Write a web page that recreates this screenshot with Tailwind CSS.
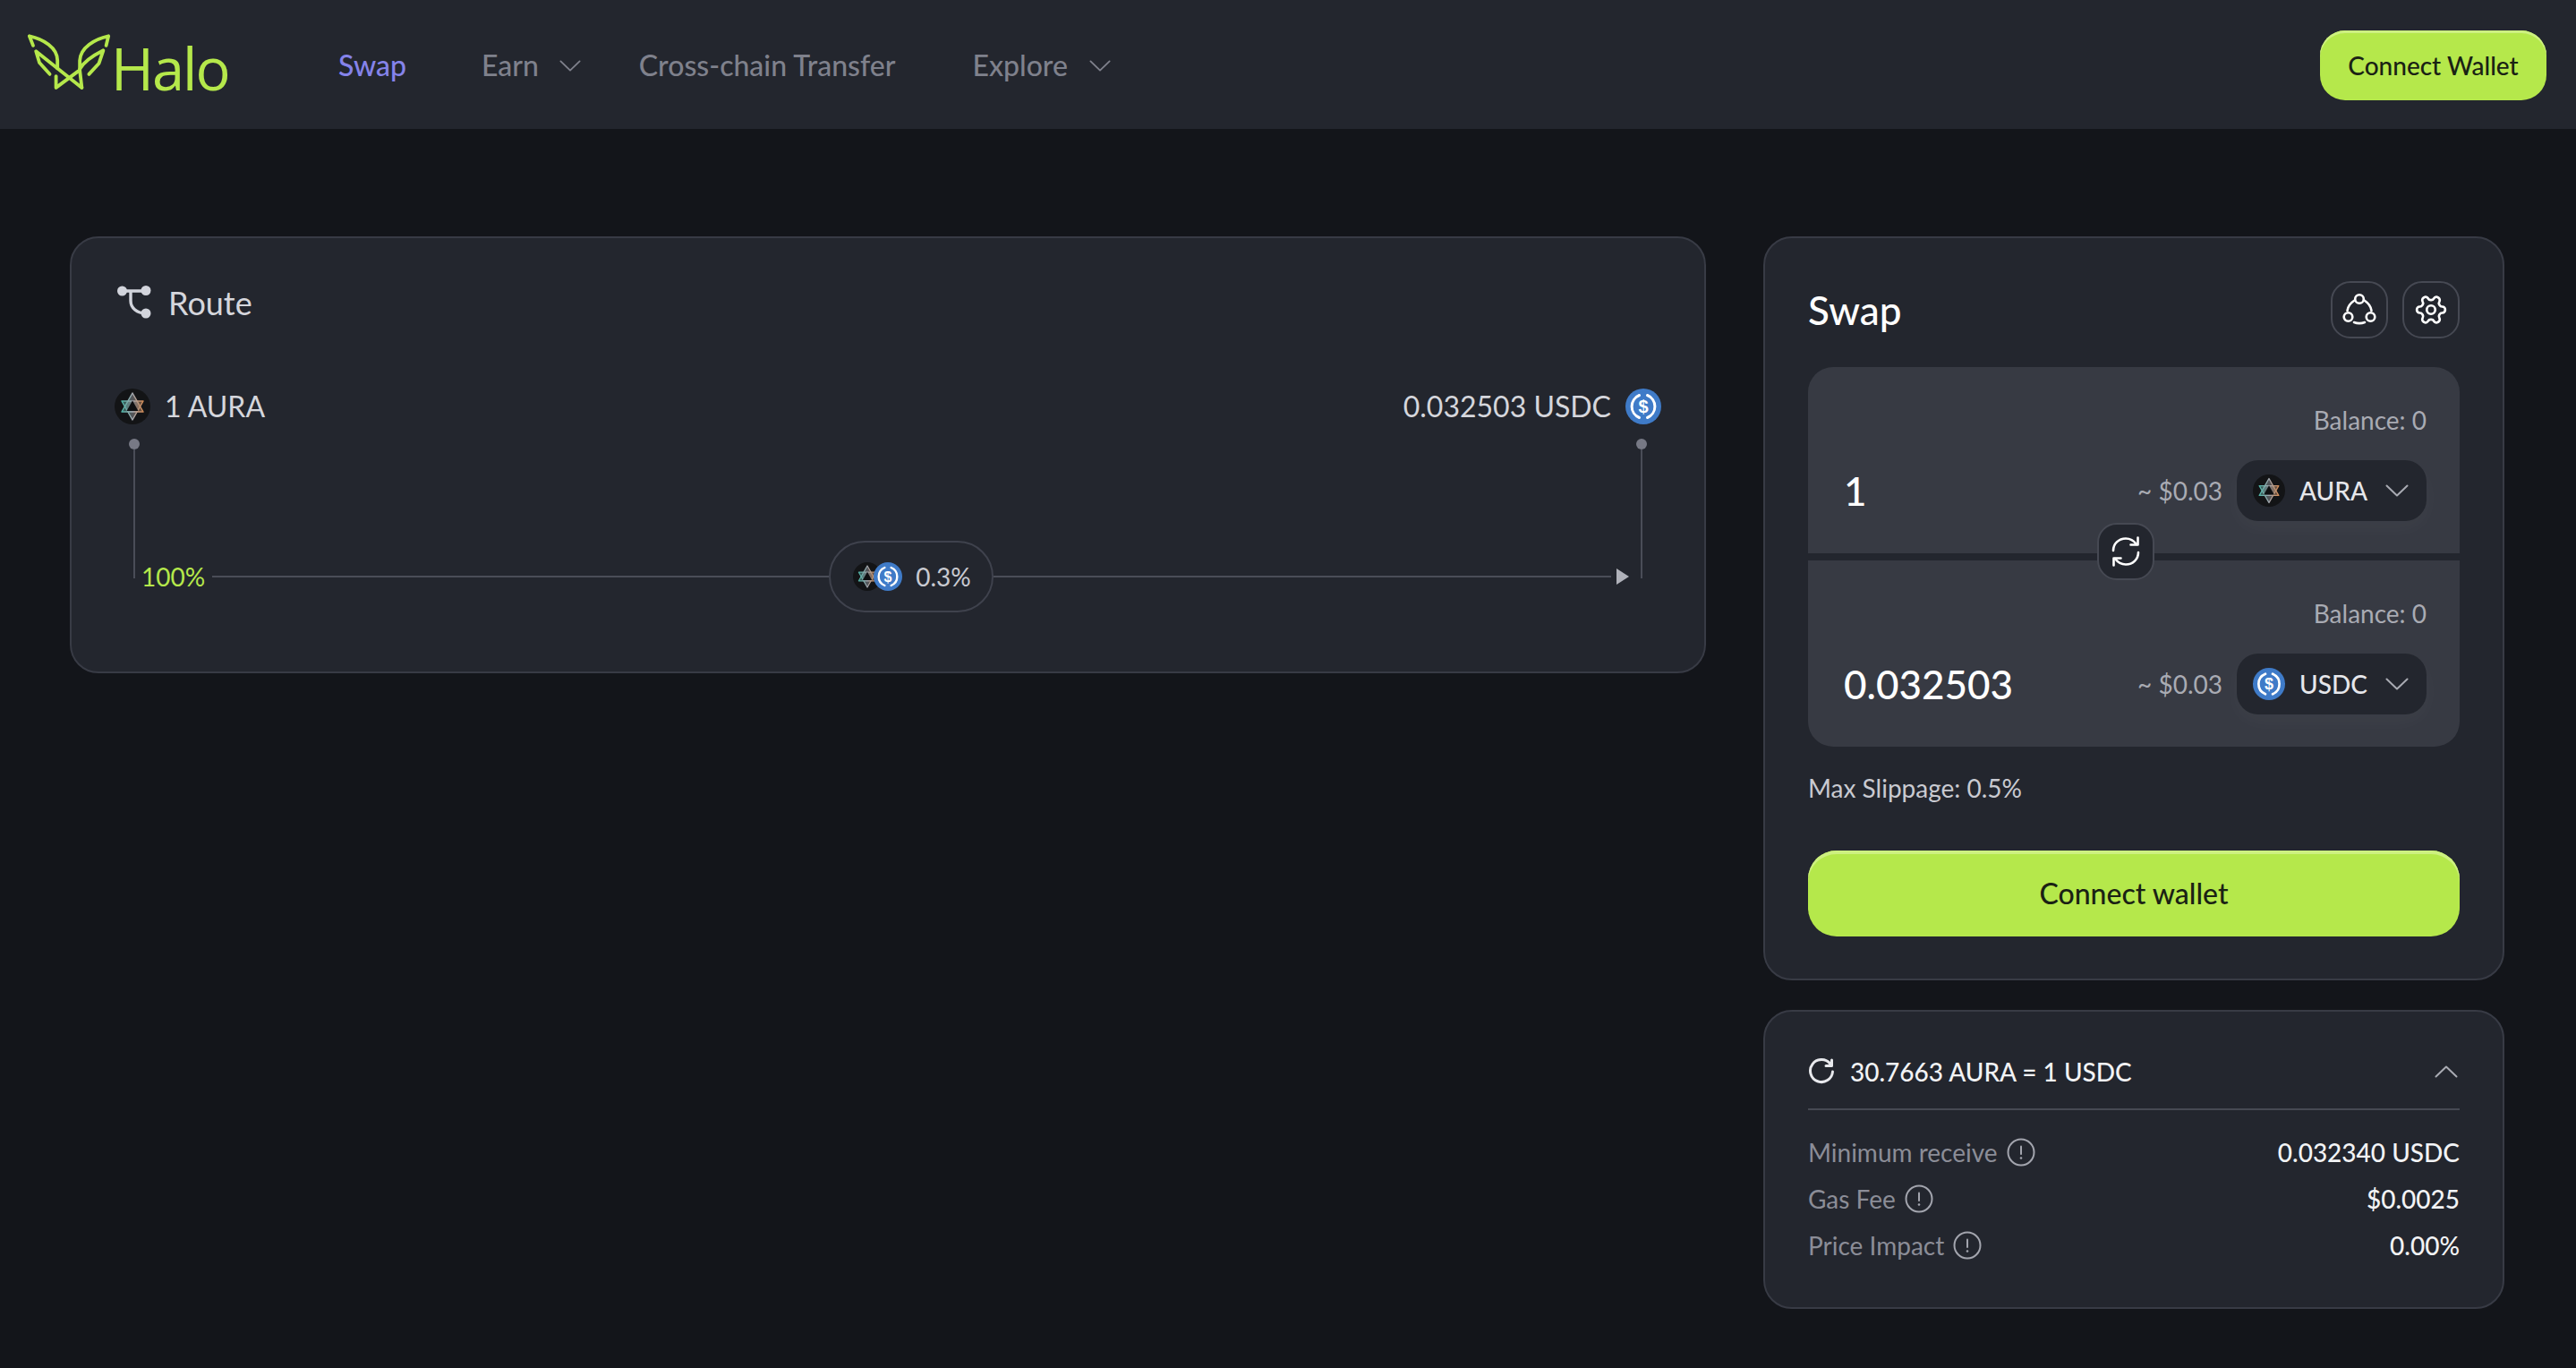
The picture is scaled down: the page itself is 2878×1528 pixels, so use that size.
<!DOCTYPE html>
<html lang="en">
<head>
  <meta charset="UTF-8" />
  <title>Halo Swap</title>
  <script src="https://cdn.jsdelivr.net/npm/@tailwindcss/browser@4"></script>
</head>
<body class="bg-[#13151a] min-h-screen font-['Lato',sans-serif] text-[#d5d6dc] overflow-hidden">
  <!-- shared icons -->
  <svg class="absolute w-0 h-0">
    <defs>
      <linearGradient id="auraGrad" x1="0" y1="0" x2="1" y2="0">
        <stop offset="0" stop-color="#4fb3a6" />
        <stop offset="0.5" stop-color="#a3a7af" />
        <stop offset="1" stop-color="#d08a55" />
      </linearGradient>
    </defs>
    <symbol id="aura" viewBox="0 0 40 40">
      <circle cx="20" cy="20" r="20" fill="#131416" />
      <path d="M20 5 L32 26 H8 Z" fill="url(#auraGrad)" fill-opacity="0.45" stroke="url(#auraGrad)" stroke-width="1.5" stroke-linejoin="round" />
      <path d="M20 35 L8 14 H32 Z" fill="url(#auraGrad)" fill-opacity="0.45" stroke="url(#auraGrad)" stroke-width="1.5" stroke-linejoin="round" />
      <path d="M20 13.5 L26.5 25 H13.5 Z" fill="#0e0f11" />
    </symbol>
    <symbol id="info" viewBox="0 0 32 32">
      <circle cx="16" cy="16" r="14.5" fill="none" stroke="#a3a5ae" stroke-width="2" />
      <path d="M16 9.5 V18" stroke="#a3a5ae" stroke-width="2" stroke-linecap="round" />
      <circle cx="16" cy="22.5" r="1.3" fill="#a3a5ae" />
    </symbol>
    <symbol id="chev" viewBox="0 0 26 14">
      <path d="M1.5 1.5 L13 12.5 L24.5 1.5" fill="none" stroke="currentColor" stroke-width="2" stroke-linecap="round" stroke-linejoin="round" />
    </symbol>
  </svg>

  <!-- 상단 -->
  <header class="h-[144px] bg-[#23262e] flex items-center pl-[29px] pr-[33px]">
    <div class="flex items-center w-[349px]">
      <svg class="w-[96px] h-[70px] mt-[-2px]" viewBox="50 55 300 212" fill="none" stroke="#b5e84b" stroke-width="12" stroke-linecap="round" stroke-linejoin="round">
        <path d="M75 98 L62 65 C110 75 160 105 160 150 V178" />
        <path d="M133 198 L97 158 L85 118 L245 245" />
        <path d="M155 245 V205 M155 245 L232 188" />
        <path d="M245 245 L238 185 V150 C240 105 290 75 338 65 L330 98" />
        <path d="M270 198 L305 160 L320 115 C290 130 255 150 238 180" />
      </svg>
      <span class="text-[#b5e84b] text-[65px] leading-none font-['Open_Sans',sans-serif] font-normal ml-[-1px] mt-[8px] tracking-[-2px]">Halo</span>
    </div>
    <nav class="flex items-center text-[32px] text-[#7f818c] font-medium mt-[2px]">
      <a class="text-[#8583ea]">Swap</a>
      <a class="ml-[84px]">Earn</a>
      <svg class="ml-[23px] w-[24px] h-[13px] text-[#7f818c]"><use href="#chev" /></svg>
      <a class="ml-[65px]">Cross-chain Transfer</a>
      <a class="ml-[86px]">Explore</a>
      <svg class="ml-[24px] w-[24px] h-[13px] text-[#7f818c]"><use href="#chev" /></svg>
    </nav>
    <button class="ml-auto mt-[1px] w-[253px] h-[78px] rounded-[28px] bg-[#b5e84b] shadow-[inset_0_3px_0_#cdf080] text-[#1a2214] text-[28px] font-medium">Connect Wallet</button>
  </header>

  <main class="flex gap-[64px] pr-[72px] pl-[78px] pt-[120px]">
    <!-- Route -->
    <section class="w-[1828px] h-[488px] self-start bg-[#23262e] border-2 border-[#383b45] rounded-[32px] pt-[52px] px-[48px]">
      <div class="flex items-center gap-[19px] pl-[3px] h-[40px]">
        <svg class="w-[38px] h-[38px]" viewBox="0 0 38 38" fill="none" stroke="#d2d4dc" stroke-width="3.4">
          <circle cx="5.5" cy="6" r="5.5" fill="#d2d4dc" stroke="none" />
          <circle cx="32" cy="5.5" r="5.5" fill="#d2d4dc" stroke="none" />
          <circle cx="32" cy="31" r="5.5" fill="#d2d4dc" stroke="none" />
          <path d="M6 6 H32 M15 6 V17 C15 25 22 31 32 31" />
        </svg>
        <span class="text-[36px] leading-none text-[#d5d6dc]">Route</span>
      </div>
      <div class="flex justify-between mt-[76px] h-[40px]">
        <div class="flex items-center gap-[16px]">
          <svg class="w-[40px] h-[40px]"><use href="#aura" /></svg>
          <span class="text-[32px] leading-none">1 AURA</span>
        </div>
        <div class="flex items-center gap-[16px]">
          <span class="text-[32px] leading-none">0.032503 USDC</span>
          <svg class="w-[40px] h-[40px]" viewBox="0 0 40 40">
            <circle cx="20" cy="20" r="20" fill="#3f7bc8" />
            <path d="M15.5 7.5 A13.5 13.5 0 0 0 15.5 32.5 M24.5 7.5 A13.5 13.5 0 0 1 24.5 32.5" fill="none" stroke="#fff" stroke-width="3" stroke-linecap="round" />
            <text x="20" y="27" text-anchor="middle" font-family="Liberation Sans" font-weight="700" font-size="20" fill="#fff">$</text>
          </svg>
        </div>
      </div>
      <!-- 경로 -->
      <div class="flex items-start mt-[16px] h-[194px] pl-[16px] pr-[16px]">
        <div class="flex flex-col items-center w-[12px]">
          <div class="w-[12px] h-[12px] rounded-full bg-[#777985]"></div>
          <div class="w-[2px] h-[144px] bg-[#4a4d58]"></div>
        </div>
        <div class="flex-1 self-end h-[80px] flex items-center">
          <span class="ml-[2px] text-[28px] leading-none text-[#b5e84b]">100%</span>
          <div class="h-[2px] bg-[#4a4d58] ml-[8px] w-[689px]"></div>
          <div class="h-[80px] w-[184px] shrink-0 rounded-full border-2 border-[#3f424d] flex items-center pl-[25px]">
            <svg class="w-[32px] h-[32px] shrink-0"><use href="#aura" /></svg>
            <svg class="w-[32px] h-[32px] shrink-0 ml-[-9px]" viewBox="0 0 40 40">
              <circle cx="20" cy="20" r="20" fill="#3f7bc8" />
              <path d="M15.5 7.5 A13.5 13.5 0 0 0 15.5 32.5 M24.5 7.5 A13.5 13.5 0 0 1 24.5 32.5" fill="none" stroke="#fff" stroke-width="3" stroke-linecap="round" />
              <text x="20" y="27" text-anchor="middle" font-family="Liberation Sans" font-weight="700" font-size="20" fill="#fff">$</text>
            </svg>
            <span class="ml-[15px] text-[28px] leading-none text-[#c9cad1]">0.3%</span>
          </div>
          <div class="h-[2px] bg-[#4a4d58] flex-1"></div>
          <svg class="w-[14px] h-[18px] ml-[6px] mr-[8px] shrink-0" viewBox="0 0 14 18"><path d="M0 0 L14 9 L0 18 Z" fill="#b0b2ba" /></svg>
        </div>
        <div class="flex flex-col items-center w-[12px]">
          <div class="w-[12px] h-[12px] rounded-full bg-[#777985]"></div>
          <div class="w-[2px] h-[144px] bg-[#4a4d58]"></div>
        </div>
      </div>
    </section>

    <div class="w-[828px] flex flex-col gap-[33px]">
      <!-- Swap -->
      <section class="h-[831px] bg-[#23262e] border-2 border-[#383b45] rounded-[32px] px-[48px] pt-[48px]">
        <div class="flex items-center justify-between h-[64px]">
          <h2 class="text-[44px] leading-none font-medium text-white">Swap</h2>
          <div class="flex gap-[16px]">
            <button class="w-[64px] h-[64px] rounded-[22px] border-2 border-[#464953] flex items-center justify-center">
              <svg class="w-[38px] h-[38px]" viewBox="0 0 38 38" fill="none" stroke="#fff" stroke-width="2.6" stroke-linecap="round">
                <circle cx="19" cy="7" r="4.8" />
                <circle cx="6.5" cy="27" r="4.8" />
                <circle cx="31.5" cy="27" r="4.8" />
                <path d="M13.5 8.5 C9 11.5 6 15.5 5.5 20 M24.5 8.5 C29 11.5 32 15.5 32.5 20 M13 33 C17 34.5 21 34.5 25 33" />
              </svg>
            </button>
            <button class="w-[64px] h-[64px] rounded-[22px] border-2 border-[#464953] flex items-center justify-center">
              <svg class="w-[38px] h-[38px] rotate-90" viewBox="0 0 24 24" fill="none" stroke="#fff" stroke-width="1.7" stroke-linecap="round" stroke-linejoin="round">
                <path d="M12.22 2h-.44a2 2 0 0 0-2 2v.18a2 2 0 0 1-1 1.73l-.43.25a2 2 0 0 1-2 0l-.15-.08a2 2 0 0 0-2.73.73l-.22.38a2 2 0 0 0 .73 2.73l.15.1a2 2 0 0 1 1 1.72v.51a2 2 0 0 1-1 1.74l-.15.09a2 2 0 0 0-.73 2.73l.22.38a2 2 0 0 0 2.73.73l.15-.08a2 2 0 0 1 2 0l.43.25a2 2 0 0 1 1 1.73V20a2 2 0 0 0 2 2h.44a2 2 0 0 0 2-2v-.18a2 2 0 0 1 1-1.73l.43-.25a2 2 0 0 1 2 0l.15.08a2 2 0 0 0 2.73-.73l.22-.39a2 2 0 0 0-.73-2.73l-.15-.08a2 2 0 0 1-1-1.74v-.5a2 2 0 0 1 1-1.74l.15-.09a2 2 0 0 0 .73-2.73l-.22-.38a2 2 0 0 0-2.73-.73l-.15.08a2 2 0 0 1-2 0l-.43-.25a2 2 0 0 1-1-1.73V4a2 2 0 0 0-2-2z" />
                <circle cx="12" cy="12" r="3" />
              </svg>
            </button>
          </div>
        </div>

        <div class="relative mt-[32px] flex flex-col gap-[8px]">
          <div class="h-[208px] bg-[#373a43] rounded-t-[28px] pl-[40px] pr-[37px] pt-[42px]">
            <p class="text-right text-[28px] leading-[34px] text-[#a9abb3]">Balance: 0</p>
            <div class="flex items-center mt-[28px] h-[68px]">
              <span class="text-[44px] leading-none text-white flex-1 font-medium">1</span>
              <span class="text-[28px] text-[#a9abb3] mr-[16px]">~ $0.03</span>
              <button class="w-[212px] h-[68px] rounded-[24px] bg-[#23262e] flex items-center pl-[18px] shadow-[0_8px_24px_rgba(255,255,255,0.03)]">
                <svg class="w-[36px] h-[36px] shrink-0"><use href="#aura" /></svg>
                <span class="ml-[16px] text-[28px] font-medium text-[#e6e7eb] w-[96px] text-left">AURA</span>
                <svg class="w-[26px] h-[14px] text-[#a9abb3]"><use href="#chev" /></svg>
              </button>
            </div>
          </div>
          <div class="h-[208px] bg-[#373a43] rounded-b-[28px] pl-[40px] pr-[37px] pt-[42px]">
            <p class="text-right text-[28px] leading-[34px] text-[#a9abb3]">Balance: 0</p>
            <div class="flex items-center mt-[28px] h-[68px]">
              <span class="text-[44px] leading-none text-white flex-1 font-medium">0.032503</span>
              <span class="text-[28px] text-[#a9abb3] mr-[16px]">~ $0.03</span>
              <button class="w-[212px] h-[68px] rounded-[24px] bg-[#23262e] flex items-center pl-[18px] shadow-[0_8px_24px_rgba(255,255,255,0.03)]">
                <svg class="w-[36px] h-[36px] shrink-0" viewBox="0 0 40 40">
                  <circle cx="20" cy="20" r="20" fill="#3f7bc8" />
                  <path d="M15.5 7.5 A13.5 13.5 0 0 0 15.5 32.5 M24.5 7.5 A13.5 13.5 0 0 1 24.5 32.5" fill="none" stroke="#fff" stroke-width="3" stroke-linecap="round" />
                  <text x="20" y="27" text-anchor="middle" font-family="Liberation Sans" font-weight="700" font-size="20" fill="#fff">$</text>
                </svg>
                <span class="ml-[16px] text-[28px] font-medium text-[#e6e7eb] w-[96px] text-left">USDC</span>
                <svg class="w-[26px] h-[14px] text-[#a9abb3]"><use href="#chev" /></svg>
              </button>
            </div>
          </div>
          <!-- 전환 버튼 -->
          <button class="absolute left-[323px] top-[174px] w-[64px] h-[64px] rounded-[22px] bg-[#23262e] border-2 border-[#464953] flex items-center justify-center">
            <svg class="w-[36px] h-[36px]" viewBox="0 0 36 36" fill="none" stroke="#fff" stroke-width="2.6" stroke-linecap="round" stroke-linejoin="round">
              <path d="M4 17 C4 9.5 10 3.5 18 3.5 C23 3.5 27 6 30 10" />
              <path d="M32 19 C32 26.5 26 32.5 18 32.5 C13 32.5 9 30 6 26" />
              <path d="M31.5 2.5 V10.5 H23.5" />
              <path d="M4.5 33.5 V25.5 H12.5" />
            </svg>
          </button>
        </div>

        <p class="mt-[29px] text-[28px] leading-[34px] text-[#c9cad1]">Max Slippage: 0.5%</p>
        <button class="mt-[53px] w-full h-[96px] rounded-[32px] bg-[#b5e84b] shadow-[inset_0_4px_0_#cdf080] text-[32px] font-medium text-[#1a2214]">Connect wallet</button>
      </section>

      <!-- 상세 -->
      <section class="h-[334px] bg-[#23262e] border-2 border-[#383b45] rounded-[32px] px-[48px]">
        <div class="h-[110px] border-b-2 border-[#464953] flex items-center pt-[26px]">
          <svg class="w-[30px] h-[30px]" viewBox="0 0 30 30" fill="none" stroke="#e8e9ed" stroke-width="3" stroke-linecap="round" stroke-linejoin="round">
            <path d="M25 6.5 A12.5 12.5 0 1 0 27.5 15" />
            <path d="M26.5 2 V8.5 H20" />
          </svg>
          <span class="ml-[17px] text-[28px] font-medium text-[#f2f3f5]">30.7663 AURA = 1 USDC</span>
          <svg class="ml-auto mr-[2px] w-[26px] h-[14px] rotate-180 text-[#a9abb3]"><use href="#chev" /></svg>
        </div>
        <div class="mt-[21px] flex flex-col">
          <div class="h-[52px] flex items-center justify-between">
            <span class="flex items-center text-[28px] text-[#8b8d97]">Minimum receive<svg class="ml-[10px] w-[32px] h-[32px]"><use href="#info" /></svg></span>
            <span class="text-[28px] font-medium text-[#f2f3f5]">0.032340 USDC</span>
          </div>
          <div class="h-[52px] flex items-center justify-between">
            <span class="flex items-center text-[28px] text-[#8b8d97]">Gas Fee<svg class="ml-[10px] w-[32px] h-[32px]"><use href="#info" /></svg></span>
            <span class="text-[28px] font-medium text-[#f2f3f5]">$0.0025</span>
          </div>
          <div class="h-[52px] flex items-center justify-between">
            <span class="flex items-center text-[28px] text-[#8b8d97]">Price Impact<svg class="ml-[10px] w-[32px] h-[32px]"><use href="#info" /></svg></span>
            <span class="text-[28px] font-medium text-[#f2f3f5]">0.00%</span>
          </div>
        </div>
      </section>
    </div>
  </main>
</body>
</html>
